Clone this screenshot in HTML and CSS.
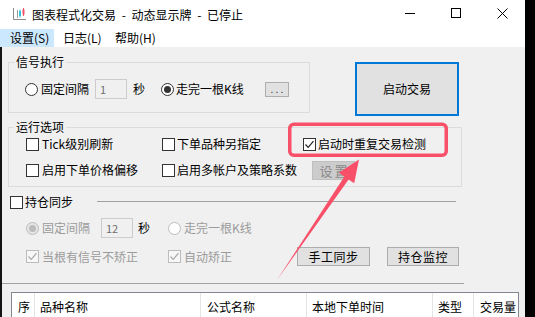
FILE: index.html
```html
<!DOCTYPE html>
<html lang="zh-CN">
<head>
<meta charset="utf-8">
<title>图表程式化交易</title>
<link rel="stylesheet" href="styles.css">
</head>
<body>
<div class="window">
  <div class="titlebar">
    <svg class="app-icon" width="15" height="12" viewBox="0 0 15 12">
      <path d="M1.5 0V11.5H14" stroke="#8a8a8a" fill="none"/>
      <path d="M5.5 2V10" stroke="#9a9a9a"/>
      <rect x="7" y="3" width="2" height="5" fill="#2ec4e0"/>
      <path d="M8 1.5V9.5" stroke="#2ec4e0"/>
      <rect x="10.5" y="1.5" width="2" height="5" fill="#f0506a"/>
      <path d="M11.5 0V8" stroke="#f0506a"/>
    </svg>
    <span class="title">图表程式化交易 - 动态显示牌 - 已停止</span>
    <div class="controls">
      <span class="ctl"><svg width="10" height="10" viewBox="0 0 10 10"><path d="M0 5.5H10" stroke="#000"/></svg></span>
      <span class="ctl"><svg width="10" height="10" viewBox="0 0 10 10"><rect x="0.5" y="0.5" width="9" height="9" fill="none" stroke="#000"/></svg></span>
      <span class="ctl"><svg width="11" height="11" viewBox="0 0 11 11"><path d="M0.5 0.5L10.5 10.5M10.5 0.5L0.5 10.5" stroke="#000"/></svg></span>
    </div>
  </div>
  <div class="menubar">
    <span class="menu-item m1 active">设置(S)</span>
    <span class="menu-item m2">日志(L)</span>
    <span class="menu-item m3">帮助(H)</span>
  </div>
  <div class="client">
    <div class="top-row">
      <div class="group group-signal">
        <div class="group-title">信号执行</div>
        <div class="signal-row">
          <span class="radio"></span><span class="label">固定间隔</span>
          <span class="input disabled in-1">1</span>
          <span class="label unit">秒</span>
          <span class="radio checked r2"></span><span class="label l2">走完一根K线</span>
          <span class="btn-small">. . .</span>
        </div>
      </div>
      <div class="btn-start">启动交易</div>
    </div>

    <div class="group group-run">
      <div class="group-title">运行选项</div>
      <div class="opt-grid">
        <div class="opt"><span class="check"></span><span class="label">Tick级别刷新</span></div>
        <div class="opt"><span class="check"></span><span class="label">下单品种另指定</span></div>
        <div class="opt"><span class="check checked"><svg width="11" height="11" viewBox="0 0 11 11"><path d="M1.5 5.5L4.2 8.3L9.5 2.2" fill="none" stroke="#222" stroke-width="1.2"/></svg></span><span class="label">启动时重复交易检测</span></div>
        <div class="opt"><span class="check"></span><span class="label">启用下单价格偏移</span></div>
        <div class="opt"><span class="check"></span><span class="label">启用多帐户及策略系数</span></div>
        <div class="opt"><span class="btn-disabled">设置</span></div>
      </div>
    </div>

    <div class="sync-head">
      <span class="check"></span><span class="label">持仓同步</span>
      <span class="sync-line"></span>
    </div>
    <div class="sync-row row-a">
      <div class="cell c1">
        <span class="radio checked disabled"></span><span class="label dim">固定间隔</span>
        <span class="input disabled in-12">12</span>
        <span class="label unit2">秒</span>
      </div>
      <div class="cell c2">
        <span class="radio disabled"></span><span class="label dim">走完一根K线</span>
      </div>
    </div>
    <div class="sync-row row-b">
      <div class="cell c1">
        <span class="check checked disabled"><svg width="11" height="11" viewBox="0 0 11 11"><path d="M1.5 5.5L4.2 8.3L9.5 2.2" fill="none" stroke="#a8a8a8" stroke-width="1.2"/></svg></span><span class="label dim">当根有信号不矫正</span>
      </div>
      <div class="cell c2">
        <span class="check checked disabled"><svg width="11" height="11" viewBox="0 0 11 11"><path d="M1.5 5.5L4.2 8.3L9.5 2.2" fill="none" stroke="#a8a8a8" stroke-width="1.2"/></svg></span><span class="label dim">自动矫正</span>
      </div>
      <span class="btn b-sync">手工同步</span>
      <span class="btn b-watch">持仓监控</span>
    </div>
    <div class="sep"></div>

    <div class="table">
      <div class="thead">
        <span class="th w1">序</span>
        <span class="th w2">品种名称</span>
        <span class="th w3">公式名称</span>
        <span class="th w4">本地下单时间</span>
        <span class="th w5">类型</span>
        <span class="th w6">交易量</span>
      </div>
    </div>
  </div>
</div>

<svg class="annotation" width="535" height="317" viewBox="0 0 535 317">
  <rect x="289.75" y="124.25" width="156.5" height="31" rx="4" fill="none" stroke="#f9506a" stroke-width="3.5"/>
  <polygon points="277,280 348.6,179.4 354.2,183.3 359,159.5 338.8,172.8 344.4,176.6" fill="#f9506a"/>
</svg>
</body>
</html>
```

FILE: styles.css
```css
* { box-sizing: border-box; }

html, body {
  margin: 0;
  padding: 0;
  background: #000;
}

body {
  width: 535px;
  height: 317px;
  position: relative;
  overflow: hidden;
  font-family: "Noto Sans CJK SC", "Noto Sans", sans-serif;
  font-size: 12px;
  color: #000;
}

.window {
  width: 525px;
  height: 317px;
  background: #f0f0f0;
  display: flex;
  flex-direction: column;
  overflow: hidden;
}

/* title bar */
.titlebar {
  height: 29px;
  flex: none;
  background: #fff;
  display: flex;
  align-items: center;
}
.app-icon {
  margin-left: 12px;
  margin-top: -1px;
  flex: none;
}
.title {
  margin-left: 5px;
  line-height: 16px;
  white-space: pre;
  word-spacing: 3px;
}
.controls {
  margin-left: auto;
  display: flex;
  height: 29px;
}
.ctl {
  width: 46px;
  height: 29px;
  display: flex;
  align-items: center;
  justify-content: center;
  padding-bottom: 3px;
}

/* menu bar */
.menubar {
  height: 18px;
  flex: none;
  background: #fff;
  display: flex;
}
.menu-item {
  height: 18px;
  line-height: 18px;
  white-space: nowrap;
}
.menu-item.m1 { width: 54px; padding-left: 10px; }
.menu-item.m2 { width: 52px; padding-left: 9px; }
.menu-item.m3 { padding-left: 9px; }
.menu-item.active { background: #cce8ff; }

/* client area */
.client {
  flex: 1;
  border-left: 2px solid #141414;
  padding-left: 6px;
  overflow: hidden;
}

.label {
  line-height: 14px;
  white-space: nowrap;
  margin-left: 3px;
}
.label.dim { color: #9b9b9b; }

.group {
  border: 1px solid #dcdcdc;
}
.group-title {
  width: max-content;
  margin: -8px 0 0 5px;
  padding: 0 2px;
  line-height: 14px;
  height: 14px;
  background: #f0f0f0;
}

.top-row {
  display: flex;
  align-items: flex-start;
  padding-top: 15px;
}
.group-signal {
  width: 302px;
  padding-bottom: 12px;
}
.signal-row {
  margin-top: 9px;
  height: 22px;
  display: flex;
  align-items: center;
  padding-left: 16px;
}
.unit { margin-left: 6px; }
.r2 { margin-left: 16px; }
.l2 { margin-left: 2px; }

.radio {
  width: 13px;
  height: 13px;
  flex: none;
  border-radius: 50%;
  border: 1px solid #333;
  background: #fff;
  display: flex;
  align-items: center;
  justify-content: center;
}
.radio.checked::after {
  content: "";
  width: 7px;
  height: 7px;
  border-radius: 50%;
  background: #333;
}
.radio.disabled {
  border-color: #bcbcbc;
  background: #fff;
}
.radio.checked.disabled { background: #e6e6e6; }
.radio.checked.disabled::after { background: #bcbcbc; }

.check {
  width: 13px;
  height: 13px;
  flex: none;
  border: 1px solid #333;
  background: #fff;
  display: flex;
  align-items: center;
  justify-content: center;
}
.check.disabled {
  border-color: #bcbcbc;
  background: #f7f7f7;
}

.input {
  width: 32px;
  height: 20px;
  flex: none;
  border: 1px solid #cccccc;
  background: #f0f0f0;
  color: #6d6d6d;
  line-height: 18px;
  padding-left: 4px;
  font-size: 11px;
}
.in-1 { margin-left: 6px; }
.in-12 { margin-left: 11px; }

.btn-small {
  margin-left: 21px;
  width: 24px;
  height: 15px;
  flex: none;
  border: 1px solid #adadad;
  background: #e1e1e1;
  font-size: 10px;
  line-height: 11px;
  text-align: center;
  color: #333;
  white-space: nowrap;
}

.btn-start {
  margin-left: 45px;
  width: 104px;
  height: 54px;
  flex: none;
  border: 2px solid #0078d7;
  background: #e1e1e1;
  display: flex;
  align-items: center;
  justify-content: center;
  line-height: 14px;
}

/* run options */
.group-run {
  margin-top: 11px;
  width: 454px;
  padding-bottom: 7px;
}
.opt-grid {
  margin-top: 1px;
  padding-left: 17px;
  display: grid;
  grid-template-columns: 136px 141px auto;
  grid-auto-rows: 18px;
  row-gap: 8px;
}
.opt {
  display: flex;
  align-items: center;
}
.opt-grid .opt:nth-child(2) .label,
.opt-grid .opt:nth-child(3) .label,
.opt-grid .opt:nth-child(5) .label { margin-left: 2px; }

.btn-disabled {
  margin-left: 9px;
  width: 43px;
  height: 19px;
  flex: none;
  border: 1px solid #bfbfbf;
  background: #cccccc;
  color: #8a8a8a;
  font-size: 13px;
  letter-spacing: 2px;
  padding-left: 2px;
  line-height: 17px;
  text-align: center;
}

/* sync */
.sync-head {
  margin-top: 6px;
  height: 18px;
  display: flex;
  align-items: center;
  padding-left: 2px;
}
.sync-head .label { margin-left: 2px; }
.sync-line {
  margin-left: 24px;
  width: 359px;
  height: 1px;
  background: #a0a0a0;
  margin-top: -1px;
}

.sync-row {
  display: flex;
  align-items: center;
  padding-left: 18px;
}
.row-a { margin-top: 7px; height: 20px; }
.row-b { margin-top: 9px; height: 19px; }
.cell {
  display: flex;
  align-items: center;
  flex: none;
}
.cell.c1 { width: 142px; }
.cell.c2 { width: 129px; }
.unit2 { margin-left: 5px; }

.btn {
  height: 19px;
  flex: none;
  border: 1px solid #adadad;
  background: #e1e1e1;
  line-height: 17px;
  text-align: center;
  font-size: 12px;
  letter-spacing: 0.5px;
}
.b-sync { width: 73px; }
.b-watch { width: 72px; margin-left: 17px; }

.sep {
  margin-top: 17px;
  margin-left: -6px;
  width: 462px;
  height: 1px;
  background: #a0a0a0;
}

/* table */
.table {
  margin-top: 8px;
  margin-left: 3px;
  width: 508px;
  height: 40px;
  border: 1px solid #828790;
  background: #fff;
}
.thead {
  display: flex;
  height: 24px;
}
.th {
  flex: none;
  height: 24px;
  border-right: 1px solid #e5e5e5;
  padding-top: 7px;
  padding-left: 5px;
  line-height: 14px;
  white-space: nowrap;
}
.th.w1 { width: 23px; padding-left: 6px; }
.th.w2 { width: 166px; }
.th.w3 { width: 106px; padding-left: 6px; }
.th.w4 { width: 126px; }
.th.w5 { width: 41px; }
.th.w6 { flex: 1; border-right: none; padding-left: 6px; }

/* annotation overlay */
.annotation {
  position: absolute;
  left: 0;
  top: 0;
  pointer-events: none;
}
```
